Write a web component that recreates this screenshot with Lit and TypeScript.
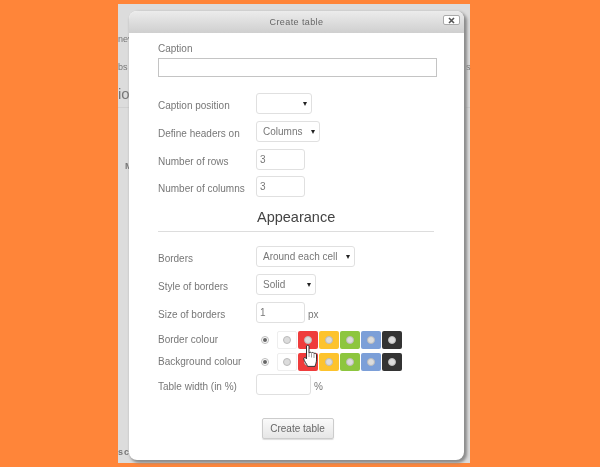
import { LitElement, html, css } from "lit";
import { customElement } from "lit/decorators.js";

const COLORS = ["#ffffff", "#ef3c3c", "#fdc32d", "#8dc63f", "#7c9fd8", "#333333"];

@customElement("app-root")
export class AppRoot extends LitElement {
  static styles = css`
    :host { display: block; width: 600px; height: 467px; background: #ff8539; overflow: hidden;
      font-family: "Liberation Sans", Arial, sans-serif; font-size: 10px; color: #6f6f6f; filter: blur(0.3px); }
    .page { position: relative; width: 352px; height: 459px; margin-left: 118px; top: 4px; background: #dcdcdc; color: #777; }
    .bg { position: absolute; white-space: nowrap; overflow: hidden; }
    .bg1 { left: 0; top: 30px; width: 11px; font-size: 9px; }
    .bg2 { left: 0; top: 58px; width: 11px; font-size: 9px; }
    .bg3 { left: 0; top: 81px; width: 11px; font-size: 15px; }
    .bg4 { left: 7px; top: 157px; font-weight: bold; font-size: 9px; }
    .bg5 { left: 0; top: 443px; font-weight: bold; width: 11px; letter-spacing: 1px; font-size: 9px; }
    .bg6 { left: 348px; top: 58px; font-size: 9px; }
    .bgline { position: absolute; left: 0; right: 0; height: 1px; background: #d0d0d0; }
    .dialog { position: absolute; left: 11px; top: 7px; width: 335px; height: 449px; background: #fff; border-radius: 8px;
      box-shadow: 2px 2px 3px 1px #8c8c8c; overflow: hidden; }
    .head { height: 22px; background: linear-gradient(#ececec, #cfcfcf); display: flex; align-items: center; justify-content: center;
      font-size: 9px; letter-spacing: 0.4px; color: #666; position: relative; }
    .close { position: absolute; right: 4px; top: 4px; width: 15px; height: 8px; background: #fff; border: 1px solid #aaa; border-radius: 2px;
      display: flex; align-items: center; justify-content: center; }
    .form { padding: 10px 27px 0 29px; }
    .cap { height: 12px; line-height: 12px; }
    .capin { box-sizing: border-box; width: 279px; height: 19px; border: 1px solid #c4c4c4; margin-top: 3px; margin-bottom: 16px; }
    .row { display: flex; align-items: center; position: relative; }
    .lab { width: 98px; flex: none; padding-top: 4px; white-space: nowrap; }
    .lab.up { padding-top: 0; padding-bottom: 2px; }
    .sel, .inp { box-sizing: border-box; border: 1px solid #e0e0e0; border-radius: 3px; background: #fff; height: 21px; line-height: 19px;
      padding-left: 6px; color: #777; position: relative; white-space: nowrap; }
    .inp { width: 49px; padding-left: 3px; }
    .sel::after { content: ""; position: absolute; right: 4px; top: 8px; border: 2.5px solid transparent; border-top: 4px solid #222; border-bottom: 0; }
    .mb6 { margin-bottom: 6px; }
    .mb7 { margin-bottom: 7px; }
    .mb8 { margin-bottom: 8px; }
    .mb4 { margin-bottom: 4px; }
    .mb3 { margin-bottom: 3px; }
    .gap { height: 10px; }
    h2 { font-size: 14.5px; font-weight: normal; color: #444; margin: 0; padding-left: 99px; height: 20px; line-height: 20px; }
    hr { border: 0; border-top: 1px solid #ddd; margin: 4px 1px 14px 0; width: 276px; }
    .unit { margin-left: 3px; padding-top: 4px; }
    .radio { width: 8px; height: 8px; border-radius: 50%; border: 1px solid #bbb; background: #fff; box-sizing: border-box; margin-left: 5px; margin-right: 8px;
      display: flex; align-items: center; justify-content: center; flex: none; }
    .radio i { width: 4px; height: 4px; background: #666; border-radius: 50%; display: block; }
    .sw { display: flex; gap: 1px; }
    .s { width: 20px; height: 18px; border-radius: 2px; display: flex; align-items: center; justify-content: center; box-sizing: border-box; }
    .s i { width: 8px; height: 8px; border-radius: 50%; background: #dcdcdc; border: 1px solid #bbb; box-sizing: border-box; display: block; }
    .s.w { border: 1px solid #eee; }
    .btnrow { display: flex; justify-content: center; margin-top: 23px; }
    .btn { box-sizing: border-box; width: 72px; height: 21px; border: 1px solid #ccc; border-radius: 2px; background: linear-gradient(#fafafa, #e6e6e6);
      text-align: center; line-height: 19px; color: #666; box-shadow: 0 1px 1px #ddd; }
    .cursor { position: absolute; left: 303px; top: 344px; }
  `;

  swatches() {
    return html`<div class="sw">${COLORS.map(
      (c, i) => html`<div class="s ${i === 0 ? "w" : ""}" style="background:${c}"><i></i></div>`
    )}</div>`;
  }

  render() {
    return html`
      <div class="page">
        <div class="bg bg1">nev</div>
        <div class="bg bg2">bs</div>
        <div class="bg bg3">io</div>
        <div class="bgline" style="top:103px"></div>
        <div class="bg bg4">M</div>
        <div class="bg bg5">sc</div>
        <div class="bg bg6">s</div>
        <div class="dialog">
          <div class="head">Create table
            <div class="close">
              <svg width="7" height="7" viewBox="0 0 7 7"><path d="M1 1l5 5M6 1l-5 5" stroke="#555" stroke-width="1.6"/></svg>
            </div>
          </div>
          <div class="form">
            <div class="cap">Caption</div>
            <div class="capin"></div>
            <div class="row mb7"><div class="lab">Caption position</div><div class="sel" style="width:56px"></div></div>
            <div class="row mb7"><div class="lab">Define headers on</div><div class="sel" style="width:64px">Columns</div></div>
            <div class="row mb6"><div class="lab">Number of rows</div><div class="inp">3</div></div>
            <div class="row"><div class="lab">Number of columns</div><div class="inp">3</div></div>
            <div class="gap"></div>
            <h2>Appearance</h2>
            <hr />
            <div class="row mb7"><div class="lab">Borders</div><div class="sel" style="width:99px">Around each cell</div></div>
            <div class="row mb7"><div class="lab">Style of borders</div><div class="sel" style="width:60px">Solid</div></div>
            <div class="row mb8"><div class="lab">Size of borders</div><div class="inp">1</div><div class="unit">px</div></div>
            <div class="row mb4"><div class="lab up">Border colour</div><div class="radio"><i></i></div>${this.swatches()}</div>
            <div class="row mb3"><div class="lab up">Background colour</div><div class="radio"><i></i></div>${this.swatches()}</div>
            <div class="row"><div class="lab">Table width (in %)</div><div class="inp" style="width:55px"></div><div class="unit">%</div></div>
            <div class="btnrow"><div class="btn">Create table</div></div>
          </div>
        </div>
      </div>
      <svg class="cursor" width="15" height="25" viewBox="0 0 15 25">
        <path d="M3.500 2c0-1 2.500-1 2.500 0v7c1-1 2-1 2.500 0 1-.8 2-.6 2.500.4 1-.5 2.500 0 2.500 1.500v5c0 3-1 4-1.500 6.500H4.500C4 20 1 17 .8 15c-.2-1.500 1-2 2-1l.7.8z" fill="#fff" stroke="#333" stroke-width="1"/>
        <path d="M6 9v4M8.500 9.500v4M11 10v4" stroke="#777" stroke-width=".7"/>
      </svg>
    `;
  }
}
